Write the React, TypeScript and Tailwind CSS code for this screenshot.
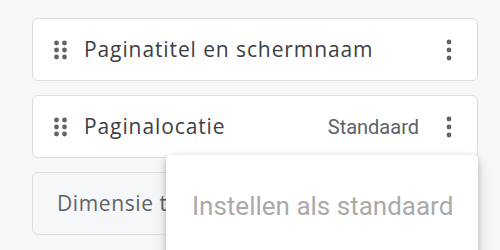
import React from 'react';

function DragHandle() {
  return (
    <svg width="14" height="20" viewBox="0 0 14 20" className="shrink-0 text-[#5f6368]">
      {[3, 10, 17].map(y => (
        <g key={y}>
          <circle cx="2.5" cy={y} r="2.4" fill="currentColor" />
          <circle cx="10.5" cy={y} r="2.4" fill="currentColor" />
        </g>
      ))}
    </svg>
  );
}

function Kebab() {
  return (
    <svg width="8" height="22" viewBox="0 0 8 22" className="shrink-0 text-[#5f6368]">
      <circle cx="4" cy="3" r="2.4" fill="currentColor" />
      <circle cx="4" cy="11" r="2.4" fill="currentColor" />
      <circle cx="4" cy="19" r="2.4" fill="currentColor" />
    </svg>
  );
}

const titleFont = { fontFamily: '"Open Sans", sans-serif' };

export default function App() {
  return (
    <div className="relative w-[500px] h-[250px] overflow-hidden bg-[#f6f7f9] px-8 pt-[18px]" style={{ fontFamily: 'Roboto, sans-serif' }}>
      <div className="flex flex-col gap-[14px] w-[446px]">
        <div className="h-[63px] flex items-center bg-white border border-[#dadce0] rounded-[6px] pl-[21px] pr-[24px]">
          <DragHandle />
          <span className="ml-[16px] text-[21px] font-medium tracking-[0.9px] text-[#3c4043]" style={titleFont}>Paginatitel en schermnaam</span>
          <span className="ml-auto"><Kebab /></span>
        </div>
        <div className="h-[63px] flex items-center bg-white border border-[#dadce0] rounded-[6px] pl-[21px] pr-[24px]">
          <DragHandle />
          <span className="ml-[16px] text-[21px] font-medium tracking-[0.9px] text-[#3c4043]" style={titleFont}>Paginalocatie</span>
          <span className="ml-auto mr-[26px] text-[20px] text-[#5f6368]">Standaard</span>
          <Kebab />
        </div>
        <div className="h-[63px] flex items-center bg-[#f6f7f9] border border-[#dadce0] rounded-[6px] pl-[24px]">
          <span className="text-[21px] tracking-[0.6px] text-[#5f6368]" style={titleFont}>Dimensie toevoegen</span>
        </div>
      </div>
      <div className="absolute left-[166px] top-[155px] w-[312px] h-[120px] bg-white rounded-[4px] shadow-[0_2px_6px_rgba(0,0,0,0.2),0_6px_16px_rgba(0,0,0,0.12)] pl-[26px] pt-[34px]">
        <span className="text-[26px] leading-[34px] text-[#aaaaaa]">Instellen als standaard</span>
      </div>
    </div>
  );
}
